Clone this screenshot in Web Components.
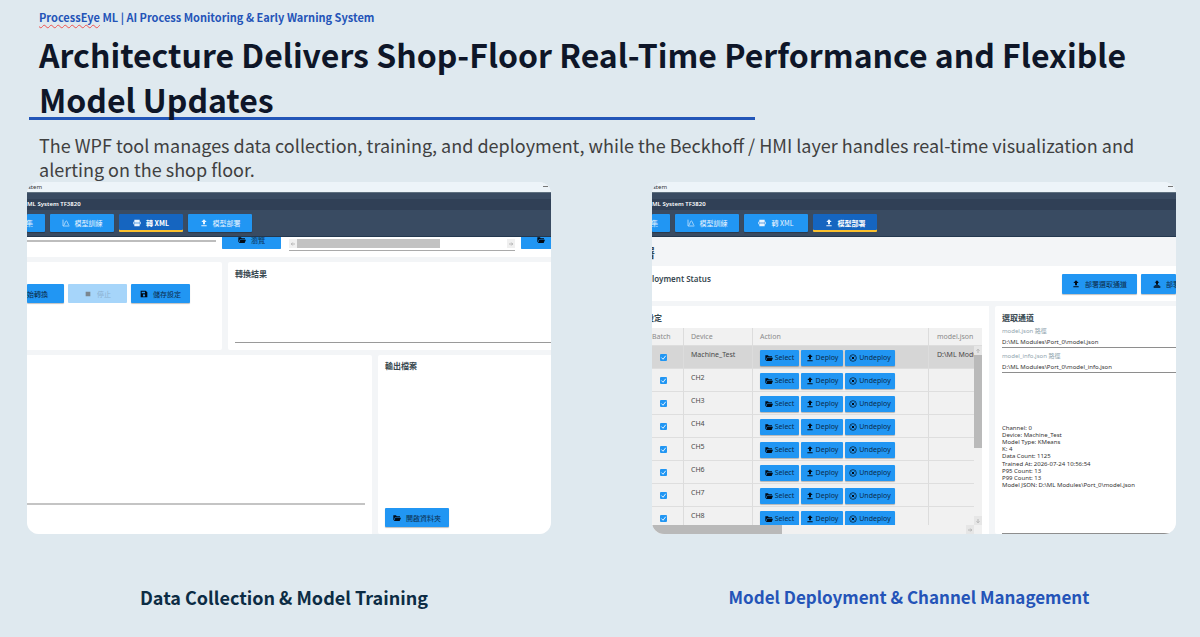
<!DOCTYPE html>
<html lang="en">
<head>
<meta charset="utf-8">
<meta name="viewport" content="width=device-width, initial-scale=1">
<title>ProcessEye ML</title>
<style>
  body { margin: 0; background: #dfe9ef; font-family: "Noto Sans CJK TC", "Noto Sans", sans-serif; }
</style>
</head>
<body>
<process-slide></process-slide>

<script>
const define = (name, html, setup) => {
  customElements.define(name, class extends HTMLElement {
    connectedCallback() {
      if (this.shadowRoot) return;
      const root = this.attachShadow({ mode: "open" });
      const t = document.createElement("template");
      t.innerHTML = typeof html === "function" ? html(this) : html;
      root.append(t.content.cloneNode(true));
      if (setup) setup(root, this);
    }
  });
};

/* Icons on a 24-unit grid */
const ICONS = {
  chart: '<path d="M3 2v19h19M5 19C9 17 9 6 13 6s4 10 8 13" fill="none" stroke="currentColor" stroke-width="2"/>',
  xml: '<path d="M4 2h16v6H4zM1 8h22v8H1zM4 16h16v6H4z" fill="currentColor"/><path d="M3 12h5m2 0h4m2 0h5" fill="none" stroke="#1976d2" stroke-width="3"/>',
  upload: '<path d="M12 1l8 8h-5v7H9V9H4zM4 19h16v3H4z" fill="currentColor"/>',
  uploadAll: '<path d="M12 1l7 7h-4v6H9V8H5zM5 15h14v2H5zM2 19h20v4H2z" fill="currentColor"/>',
  folder: '<path d="M1 4h8l2 3h10v3H6L2 19H1zM7 11h17l-4 10H3z" fill="currentColor"/>',
  save: '<path d="M3 2h14l5 5v15H2V2zM5 5v5h10V5zM12 13a3.500 3.500 0 1 0 0 7 3.500 3.500 0 0 0 0-7z" fill="currentColor" fill-rule="evenodd"/>',
  stop: '<path d="M5 5h14v14H5z" fill="currentColor"/>',
  cancel: '<circle cx="12" cy="12" r="10" fill="none" stroke="currentColor" stroke-width="2"/><path d="M8 8l8 8M16 8l-8 8" stroke="currentColor" stroke-width="3"/>',
  left: '<path d="M20 12H5m6-6l-6 6 6 6" fill="none" stroke="currentColor" stroke-width="3"/>',
  right: '<path d="M4 12h15m-6-6l6 6-6 6" fill="none" stroke="currentColor" stroke-width="3"/>',
  up: '<path d="M12 20V5m-6 6l6-6 6 6" fill="none" stroke="currentColor" stroke-width="3"/>',
  down: '<path d="M12 4v15m-6-6l6 6 6-6" fill="none" stroke="currentColor" stroke-width="3"/>'
};

define("ui-icon", el => `
  <style>
    :host { display: inline-flex; flex: none; width: var(--icon, 8px); height: var(--icon, 8px); }
    svg { width: 100%; height: 100%; display: block; }
  </style>
  <svg viewBox="0 0 24 24" aria-hidden="true">${ICONS[el.getAttribute("name")]}</svg>`);

/* Push button: variants nav, active, cut-left (runs off the left edge), cut-right */
define("tool-button", el => `
  <style>
    :host { display: inline-flex; flex: none; width: 59px; height: 19px; }
    button { all: unset; box-sizing: border-box; flex: 1; min-width: 0; display: flex; align-items: center;
      justify-content: center; gap: var(--gap, 5px); overflow: hidden; white-space: nowrap; cursor: pointer;
      background: #2196f3; color: #0b2c4b; border-radius: 1px; box-shadow: 0 1px 1px #00000040;
      font: 7px/10px "Noto Sans CJK TC", sans-serif; }
    ui-icon { color: #020a14; }
    :host([nav]) { width: 64px; height: 18px; }
    :host([nav]) button, :host([nav]) ui-icon { color: #e8f4ff; }
    :host([active]) button { background: #1565c0; color: #fff; font-weight: 700; box-shadow: inset 0 -2px #fbc02d; }
    :host([small]) { --gap: 2px; height: 16px; }
    :host([small]) button { font: 7px/10px "Noto Sans", sans-serif; }
    :host([cut-left]) button { justify-content: flex-end; padding-right: var(--cut, 12px); }
    :host([cut-right]) button { justify-content: flex-start; padding-left: var(--cut, 12px); }
    button:disabled { background: #a6d5fa; color: #8bb0cf; box-shadow: none; }
    button:disabled ui-icon { color: #7b8790; }
  </style>
  <button type="button" ${el.hasAttribute("off") ? "disabled" : ""}>
    ${el.hasAttribute("icon") ? `<ui-icon name="${el.getAttribute("icon")}"></ui-icon>` : ""}<slot></slot>
  </button>`);

/* Application frame: caption strip, product bar, navigation */
define("app-window", el => {
  const at = el.getAttribute("page");
  const nav = [["chart", "模型訓練", "train"], ["xml", "轉 XML", "xml"], ["upload", "模型部署", "deploy"]];
  return `
  <style>
    :host { display: flex; flex-direction: column; min-height: 352px; border-radius: 12px; overflow: hidden; background: #f3f5f7; }
    .caption { display: flex; justify-content: space-between; height: 10px; padding: 0 3px 0 1px; background: #edf4f9;
      color: #333; font: 6px/11px "Noto Sans", sans-serif; }
    .caption i { width: 5px; height: 1px; margin-top: 4px; background: #777; }
    header { background: #394b62; border-top: 1px solid #5f7180; padding-top: 6px; border-bottom: 1px solid #24384f; }
    .product { height: 11px; background: #304056; color: #fff; font: 600 6px/11px "Noto Sans", sans-serif; white-space: nowrap; }
    nav { display: flex; gap: 5px; padding: 4px 0 4px; }
    nav .first { width: 18px; }
    main { flex: 1; display: flex; flex-direction: column; min-width: 0; }
  </style>
  <div class="caption"><span>stem</span><i></i></div>
  <header>
    <div class="product">ML System TF3820</div>
    <nav><tool-button class="first" nav cut-left>集</tool-button>${nav.map(([i, t, k]) =>
      `<tool-button nav icon="${i}" ${k === at ? "active" : ""}>${t}</tool-button>`).join("")}</nav>
  </header>
  <main><slot></slot></main>`;
});

/* XML conversion page */
define("convert-page", `
  <style>
    :host { flex: 1; display: grid; grid-template-rows: 20px 88px 1fr; gap: 5px; }
    section { background: #fff; }
    .source { display: flex; align-items: flex-start; overflow: hidden; }
    .source > .path { width: 189px; height: 3px; margin-right: 6px; border-bottom: 2px solid #bdbdbd; }
    .browse { height: 12px; margin-right: 8px; overflow: hidden; display: flex; align-items: flex-end; }
    .browse.last { margin: 0 0 0 6px; flex: none; width: 30px; --cut: 16px; }
    .scroll { flex: 1; display: flex; justify-content: space-between; margin-top: 2px; border-bottom: 1px solid #aaa; padding-bottom: 2px; --icon: 6px; }
    .scroll span { width: 8px; height: 9px; background: #f0f0f0; color: #aaa; display: grid; place-items: center; }
    .thumb { flex: 1; }
    .thumb i { display: block; width: 68%; height: 9px; background: #c2c2c2; }
    .row { display: grid; gap: 6px; }
    .middle { grid-template-columns: 195px 1fr; }
    .bottom { grid-template-columns: 345px 1fr; }
    .actions { display: flex; gap: 4px; padding-top: 22px; border-radius: 0 2px 2px 0; }
    .actions .first { width: 37px; --cut: 16px; }
    .panel { display: flex; flex-direction: column; padding: 6px 0 7px 7px; border-radius: 2px 0 0 2px; }
    h3 { margin: 0; font: 700 8px/12px "Noto Sans CJK TC", sans-serif; color: #37474f; }
    textarea { all: unset; flex: 1; min-height: 0; border-bottom: 1px solid #9a9a9a; font-size: 7px; }
    .log { display: flex; padding: 0 7px 29px 0; border-radius: 0 2px 0 0; }
    .log textarea { border-bottom: 2px solid #c4c4c4; }
    .files { justify-content: space-between; }
    .files h3 { line-height: 10px; }
    .files tool-button { width: 64px; }
  </style>
  <section class="source">
    <div class="path"></div>
    <div class="browse"><tool-button icon="folder">瀏覽</tool-button></div>
    <div class="scroll"><span><ui-icon name="left"></ui-icon></span><div class="thumb"><i></i></div><span><ui-icon name="right"></ui-icon></span></div>
    <div class="browse last"><tool-button icon="folder" cut-right></tool-button></div>
  </section>
  <div class="row middle">
    <section class="actions">
      <tool-button class="first" cut-left>始轉換</tool-button>
      <tool-button icon="stop" off>停止</tool-button>
      <tool-button icon="save">儲存設定</tool-button>
    </section>
    <section class="panel"><h3 id="result">轉換結果</h3><textarea readonly aria-labelledby="result"></textarea></section>
  </div>
  <div class="row bottom">
    <section class="log"><textarea readonly aria-label="Log"></textarea></section>
    <section class="panel files"><h3>輸出檔案</h3><tool-button icon="folder">開啟資料夾</tool-button></section>
  </div>`);

define("channel-table", `
  <style>
    :host { display: grid; grid-template-rows: 197px 9px; margin-right: 7px; background: #f1f1f1; }
    .view { position: relative; overflow: hidden; }
    table { width: 100%; table-layout: fixed; border-collapse: separate; border-spacing: 0; font: 7px/10px "Noto Sans", sans-serif; color: #4a4a4a; }
    th { height: 17px; padding: 0 0 0 7px; text-align: left; font-weight: 400; color: #8a8a8a; border-bottom: 1px solid #ddd; }
    td { height: 18px; padding: 4px 0 0 7px; vertical-align: top; border-bottom: 1px solid #dedede; white-space: nowrap; overflow: hidden; }
    th:first-child { padding-left: 0; }
    td:first-child { padding-left: 8px; }
    th:last-child, td:last-child { padding-left: 8px; }
    th + th, td + td { border-left: 1px solid #dcdcdc; }
    td, th { box-sizing: content-box; }
    tr.on td { background: #d6d6d6; }
    .c1 { width: 31px; } .c2 { width: 69px; } .c3 { width: 176px; }
    .buttons { display: flex; gap: 2px; }
    .buttons tool-button:nth-child(1) { width: 39px; }
    .buttons tool-button:nth-child(2) { width: 42px; }
    .buttons tool-button:nth-child(3) { width: 50px; }
    input { appearance: none; display: block; width: 7px; height: 7px; margin: 4px 0 0; border-radius: 1px; background: #2196f3; }
    label { display: grid; place-items: center; width: 7px; }
    label > * { grid-area: 1 / 1; }
    label svg { width: 7px; height: 7px; margin-top: 4px; pointer-events: none; z-index: 1; }
    .vscroll { position: absolute; inset: 18px 0 0 auto; width: 8px; display: flex; flex-direction: column; background: #f1f1f1; color: #aaa; }
    .arrow { width: 8px; height: 9px; display: grid; place-items: center; background: #e6e6e6; --icon: 6px; color: #aaa; }
    .vscroll i { flex: 1; background: linear-gradient(#bababa 58%, #f1f1f1 58%); }
    .hscroll { display: flex; justify-content: space-between; padding-right: 8px; }
    .hscroll i { width: 130px; background: #b9b9b9; }
  </style>
  <div class="view">
    <table>
      <colgroup><col class="c1"><col class="c2"><col class="c3"><col></colgroup>
      <thead><tr><th>Batch</th><th>Device</th><th>Action</th><th>model.json</th></tr></thead>
      <tbody></tbody>
    </table>
    <div class="vscroll"><span class="arrow"><ui-icon name="up"></ui-icon></span><i></i><span class="arrow"><ui-icon name="down"></ui-icon></span></div>
  </div>
  <div class="hscroll"><i></i><span class="arrow"><ui-icon name="right"></ui-icon></span></div>`,
  root => {
    const names = ["Machine_Test", "CH2", "CH3", "CH4", "CH5", "CH6", "CH7", "CH8"];
    root.querySelector("tbody").innerHTML = names.map((n, i) => `
      <tr class="${i ? "" : "on"}">
        <td><label><input type="checkbox" checked aria-label="${n}"><svg viewBox="0 0 8 8"><path d="M1.500 4l2 2 3-4" fill="none" stroke="#fff"/></svg></label></td>
        <td>${n}</td>
        <td><div class="buttons"><tool-button small icon="folder">Select</tool-button><tool-button small icon="upload">Deploy</tool-button><tool-button small icon="cancel">Undeploy</tool-button></div></td>
        <td>${i ? "" : "D:\\ML Modu"}</td>
      </tr>`).join("");
  });

define("path-field", el => `
  <style>
    :host { display: flex; flex-direction: column; height: 21px; margin-bottom: 4px; }
    label { font: 6px/9px "Noto Sans", "Noto Sans CJK TC", sans-serif; color: #90a4ae; white-space: nowrap; height: 9px; }
    input { all: unset; flex: 1; font: 6px/10px "Noto Sans", sans-serif; color: #333; border-bottom: 1px solid #8e8e8e; }
  </style>
  <label for="path">${el.getAttribute("label")}</label>
  <input id="path" type="text" readonly value="${el.getAttribute("value")}">`);

/* Deployment page */
define("deploy-page", `
  <style>
    :host { flex: 1; display: flex; flex-direction: column; min-width: 0; }
    h2 { margin: 0; height: 29px; font: 700 12px/31px "Noto Sans CJK TC", sans-serif; color: #37474f; text-indent: -9px; overflow: hidden; }
    .status { display: flex; justify-content: space-between; height: 27px; padding-top: 8px; background: #fff; overflow: hidden; }
    h3 { margin: 0; font: 600 8px/10px "Noto Sans", "Noto Sans CJK TC", sans-serif; color: #37474f; white-space: nowrap; }
    .buttons { display: flex; gap: 4px; }
    .buttons tool-button { width: 75px; height: 20px; }
    .buttons tool-button:last-child { width: 35px; }
    .body { flex: 1; display: grid; grid-template-columns: 1fr 181px; gap: 6px; margin-top: 5px; }
    section { background: #fff; min-width: 0; }
    .channels h3 { height: 22px; line-height: 24px; text-indent: -6px; overflow: hidden; }
    .detail { display: flex; flex-direction: column; padding-left: 7px; border-radius: 2px 0 0 2px; }
    .detail h3 { height: 21px; line-height: 24px; font-weight: 700; }
    ul { flex: 1; display: grid; grid-auto-rows: 1fr; list-style: none; margin: 0; padding: 48px 0 44px;
      font: 6px/7px "Noto Sans", sans-serif; color: #333; border-bottom: 1px solid #8e8e8e; white-space: nowrap; }
  </style>
  <h2>署</h2>
  <div class="status">
    <h3>loyment Status</h3>
    <div class="buttons"><tool-button icon="upload">部署選取通道</tool-button><tool-button icon="uploadAll" cut-right>部署</tool-button></div>
  </div>
  <div class="body">
    <section class="channels"><h3>設定</h3><channel-table></channel-table></section>
    <section class="detail">
      <h3>選取通道</h3>
      <path-field label="model.json 路徑" value="D:\\ML Modules\\Port_0\\model.json"></path-field>
      <path-field label="model_info.json 路徑" value="D:\\ML Modules\\Port_0\\model_info.json"></path-field>
      <ul><li>Channel: 0</li><li>Device: Machine_Test</li><li>Model Type: KMeans</li><li>K: 4</li><li>Data Count: 1125</li><li>Trained At: 2026-07-24 10:56:54</li><li>P95 Count: 13</li><li>P99 Count: 13</li><li>Model JSON: D:\\ML Modules\\Port_0\\model.json</li></ul>
    </section>
  </div>`);

define("slide-header", `
  <style>
    :host { display: block; padding: 8px 29px 0; }
    .eyebrow { margin: 0 10px; font-size: 11px; line-height: 18px; font-weight: 700; color: #2454b8; }
    .eyebrow span { text-decoration: underline wavy #ef5350 1px; text-underline-offset: 2px; text-decoration-skip-ink: none; }
    h1 { margin: 0; padding: 6px 10px 0; font-size: 32px; line-height: 45px; font-weight: 700; color: #0e1628; }
    hr { margin: -5px 0 0; width: 726px; max-width: 100%; height: 3px; border: 0; background: #2356b8; }
    .lead { margin: 0 10px; padding: 13px 0 1px; font-size: 18px; line-height: 24px; color: #404040; }
  </style>
  <p class="eyebrow"><span>ProcessEye</span> ML | AI Process Monitoring &amp; Early Warning System</p>
  <h1>Architecture Delivers Shop-Floor Real-Time Performance and Flexible Model Updates</h1>
  <hr>
  <p class="lead">The WPF tool manages data collection, training, and deployment, while the Beckhoff / HMI layer handles real-time visualization and alerting on the shop floor.</p>`);

define("slide-figure", `
  <style>
    :host { display: block; min-width: 0; }
    figure { margin: 0; }
    figcaption { padding: 49px 10px 0 0; text-align: center; font-size: var(--caption, 18px); line-height: 28px; font-weight: 700; color: var(--ink, #0c2c44); }
  </style>
  <figure><slot></slot><figcaption><slot name="caption"></slot></figcaption></figure>`);

define("process-slide", `
  <style>
    :host { display: block; }
    .pair { display: grid; grid-template-columns: 1fr 1fr; gap: 101px; padding: 0 24px 0 27px; }
    .second { --ink: #2454b8; --caption: 17px; }
  </style>
  <slide-header></slide-header>
  <div class="pair">
    <slide-figure><app-window page="xml"><convert-page></convert-page></app-window><span slot="caption">Data Collection &amp; Model Training</span></slide-figure>
    <slide-figure class="second"><app-window page="deploy"><deploy-page></deploy-page></app-window><span slot="caption">Model Deployment &amp; Channel Management</span></slide-figure>
  </div>`);
</script>
</body>
</html>
